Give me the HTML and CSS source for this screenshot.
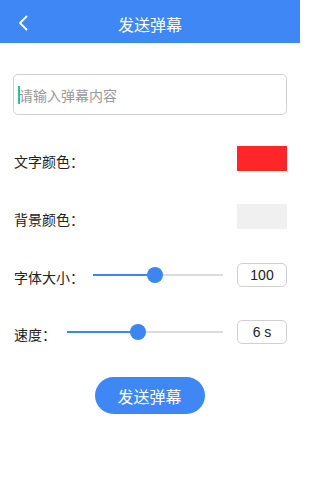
FILE: index.html
```html
<!DOCTYPE html>
<html lang="zh">
<head>
<meta charset="utf-8">
<title>发送弹幕</title>
<link rel="stylesheet" href="styles.css">
</head>
<body>
<header class="topbar">
  <svg class="back" width="12" height="16" viewBox="0 0 12 16"><path d="M9.5 1.5 L3 8 L9.5 14.5" fill="none" stroke="#fff" stroke-width="1.8" stroke-linecap="round" stroke-linejoin="round"/></svg>
  <h1 class="title">发送弹幕</h1>
</header>
<main class="content">
  <div class="input"><span class="caret"></span><span class="placeholder">请输入弹幕内容</span></div>
  <div class="row row-color">
    <span class="label">文字颜色：</span>
    <span class="swatch swatch-red"></span>
  </div>
  <div class="row row-color">
    <span class="label">背景颜色：</span>
    <span class="swatch swatch-grey"></span>
  </div>
  <div class="row row-slider">
    <span class="label">字体大小：</span>
    <div class="slider">
      <div class="track"></div>
      <div class="fill" style="width:47.7%"></div>
      <div class="thumb" style="left:47.7%"></div>
    </div>
    <span class="valbox">100</span>
  </div>
  <div class="row row-slider">
    <span class="label">速度：</span>
    <div class="slider">
      <div class="track"></div>
      <div class="fill" style="width:45.5%"></div>
      <div class="thumb" style="left:45.5%"></div>
    </div>
    <span class="valbox">6 s</span>
  </div>
  <div class="btnwrap"><button class="send">发送弹幕</button></div>
</main>
</body>
</html>
```
FILE: styles.css
```css
* { box-sizing: border-box; }
html { background: #fff; }
body {
  margin: 0;
  width: 300px;
  background: #fff;
  font-family: "Noto Sans CJK SC", "Noto Sans", sans-serif;
  color: #222;
}
.topbar {
  position: relative;
  height: 43px;
  background: #3e87f5;
  display: flex;
  align-items: center;
  justify-content: center;
  padding-top: 4px;
}
.back {
  position: absolute;
  left: 17px;
  top: 15px;
}
.title {
  margin: 0;
  font-size: 16px;
  font-weight: normal;
  color: #fff;
  line-height: 20px;
}
.content {
  padding: 31px 13px 0 13px;
  display: flex;
  flex-direction: column;
}
.input {
  height: 41px;
  border: 1.5px solid #d0d0d0;
  border-radius: 5px;
  display: flex;
  align-items: center;
  padding-left: 4px;
}
.caret {
  width: 2px;
  height: 18px;
  background: #27c19b;
  margin-right: -1px;
}
.placeholder {
  font-size: 14px;
  color: #999;
  line-height: 18px;
}
.row {
  display: flex;
  align-items: center;
}
.row-color {
  height: 25px;
  justify-content: space-between;
  margin-top: 31px;
}
.row-color + .row-color { margin-top: 33px; }
.label {
  font-size: 14px;
  padding-left: 1px;
  padding-top: 4px;
  white-space: nowrap;
}
.swatch {
  width: 50px;
  height: 25px;
}
.swatch-red { background: #fe2628; }
.swatch-grey { background: #f0f0f0; }
.row-slider {
  height: 24px;
  margin-top: 34px;
}
.row-slider + .row-slider { margin-top: 33px; }
.slider {
  position: relative;
  flex: 1;
  height: 16px;
  margin: 0 14px 0 9px;
}
.row-slider + .row-slider .slider { margin-left: 11px; }
.track {
  position: absolute;
  left: 0; right: 0;
  top: 7px;
  height: 2px;
  background: #dcdcdc;
}
.fill {
  position: absolute;
  left: 0;
  top: 7px;
  height: 2px;
  background: #3c86f0;
}
.thumb {
  position: absolute;
  top: 0;
  width: 16px;
  height: 16px;
  margin-left: -8px;
  border-radius: 50%;
  background: #3c86f0;
}
.valbox {
  width: 50px;
  height: 24px;
  border: 1.5px solid #d0d0d0;
  border-radius: 5px;
  font-family: "Liberation Sans", "Noto Sans CJK SC", sans-serif;
  font-size: 14px;
  display: flex;
  align-items: center;
  justify-content: center;
  color: #222;
}
.btnwrap {
  display: flex;
  justify-content: center;
  margin-top: 33px;
}
.send {
  width: 110px;
  height: 37px;
  border: none;
  border-radius: 19px;
  background: #3e87f5;
  color: #fff;
  font-family: "Noto Sans CJK SC", sans-serif;
  font-size: 16px;
  padding: 0;
  margin-left: -1px;
}
```
